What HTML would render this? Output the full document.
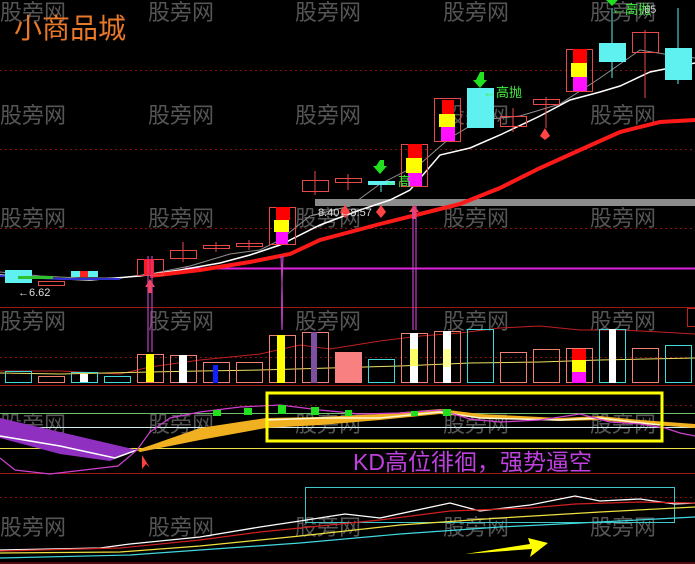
<!DOCTYPE html>
<html><head><meta charset="utf-8"><style>
html,body{margin:0;padding:0;background:#000;}
svg{display:block}
text{font-family:"Liberation Sans","Noto Sans CJK SC",sans-serif}
</style></head><body>
<svg width="695" height="564" viewBox="0 0 695 564" xmlns="http://www.w3.org/2000/svg">
<rect width="695" height="564" fill="#000"/>
<g stroke="#8a1010" stroke-width="1" stroke-dasharray="2,3">
<line x1="0" y1="70.5" x2="695" y2="70.5"/><line x1="0" y1="149.5" x2="695" y2="149.5"/><line x1="0" y1="228.5" x2="695" y2="228.5"/>
<line x1="0" y1="357.5" x2="695" y2="357.5"/><line x1="0" y1="405.5" x2="695" y2="405.5"/><line x1="0" y1="497.5" x2="695" y2="497.5"/>
</g>
<g stroke="#a01818" stroke-width="1">
<line x1="0" y1="307.5" x2="695" y2="307.5"/><line x1="0" y1="385.5" x2="695" y2="385.5"/><line x1="0" y1="473.5" x2="695" y2="473.5"/><line x1="0" y1="563" x2="695" y2="563"/>
</g>
<g fill="#555" font-size="22">
<text x="0" y="20">股旁网</text><text x="148" y="20">股旁网</text><text x="295" y="20">股旁网</text><text x="443" y="20">股旁网</text><text x="590" y="20">股旁网</text>
<text x="0" y="123">股旁网</text><text x="148" y="123">股旁网</text><text x="295" y="123">股旁网</text><text x="443" y="123">股旁网</text><text x="590" y="123">股旁网</text>
<text x="0" y="226">股旁网</text><text x="148" y="226">股旁网</text><text x="295" y="226">股旁网</text><text x="443" y="226">股旁网</text><text x="590" y="226">股旁网</text>
<text x="0" y="329">股旁网</text><text x="148" y="329">股旁网</text><text x="295" y="329">股旁网</text><text x="443" y="329">股旁网</text><text x="590" y="329">股旁网</text>
<text x="0" y="432">股旁网</text><text x="148" y="432">股旁网</text><text x="295" y="432">股旁网</text><text x="443" y="432">股旁网</text><text x="590" y="432">股旁网</text>
<text x="0" y="535">股旁网</text><text x="148" y="535">股旁网</text><text x="295" y="535">股旁网</text><text x="443" y="535">股旁网</text><text x="590" y="535">股旁网</text>
</g>
<text x="14" y="38" fill="#e8782a" font-size="28">小商品城</text>
<rect x="315" y="199" width="380" height="7" fill="#8c8c8c"/>
<line x1="185" y1="268.5" x2="695" y2="268.5" stroke="#e020e0" stroke-width="2"/>
<polyline points="0,272 40,276 80,278 120,278 150,274 190,266 230,254 260,250 280,240 310,216 350,206 380,184 420,164 450,138 480,120 520,116 560,104 600,78 640,50 670,55 695,58" fill="none" stroke="#909090" stroke-width="1"/>
<polyline points="0,275 40,278 90,280 140,276 180,270 220,263 250,255 280,245 320,225 360,210 390,200 410,190 440,155 470,148 500,135 540,116 570,100 600,92 620,86 650,72 680,66 695,63" fill="none" stroke="#fff" stroke-width="1.5"/>
<polyline points="150,276 200,270 250,262 290,254 320,240 380,224 420,214 460,204 500,188 540,168 580,150 620,132 660,122 695,120" fill="none" stroke="#ff1a1a" stroke-width="4"/>
<polyline points="0,276 60,279 120,279" fill="none" stroke="#3030d0" stroke-width="2"/>
<g stroke="#e84848" stroke-width="1" fill="none">
<line x1="183" y1="242" x2="183" y2="262"/><rect x="170.5" y="250.5" width="26" height="8"/>
<line x1="216" y1="242" x2="216" y2="252"/><rect x="203.5" y="245.5" width="26" height="3"/>
<line x1="249" y1="240" x2="249" y2="250"/><rect x="236.5" y="243.5" width="26" height="3"/>
<line x1="315" y1="171" x2="315" y2="195"/><rect x="302.5" y="180.5" width="26" height="11"/>
<line x1="348" y1="174" x2="348" y2="190"/><rect x="335.5" y="178.5" width="26" height="4"/>
<line x1="513" y1="108" x2="513" y2="132"/><rect x="500.5" y="116.5" width="26" height="10"/>
<line x1="546" y1="97" x2="546" y2="128"/><rect x="533.5" y="99.5" width="26" height="5"/>
<line x1="645" y1="30" x2="645" y2="98"/><rect x="632.5" y="32.5" width="26" height="20"/>
<rect x="38.5" y="281.5" width="26" height="4"/>
<rect x="137.5" y="259.5" width="26" height="16"/>
<rect x="269.5" y="207.5" width="26" height="37"/>
<rect x="401.5" y="144.5" width="26" height="42"/>
<rect x="434.5" y="98.5" width="26" height="43"/>
<rect x="566.5" y="49.5" width="26" height="42"/>
</g>
<rect x="144" y="259" width="10" height="16" fill="#ff1a1a"/>
<g fill="#5ff0f0">
<rect x="5" y="270" width="27" height="13"/>
<rect x="71" y="271" width="27" height="6"/>
<rect x="368" y="181" width="27" height="4"/>
<rect x="467" y="88" width="27" height="40"/>
<rect x="599" y="43" width="27" height="19"/>
<rect x="665" y="48" width="27" height="32"/>
</g>
<g stroke="#5ff0f0"><line x1="612" y1="8" x2="612" y2="78"/><line x1="678" y1="8" x2="678" y2="84"/><line x1="381" y1="185" x2="381" y2="192"/></g>
<rect x="80" y="271" width="8" height="6" fill="#ff2020"/>
<rect x="18" y="276" width="35" height="3" fill="#30c030"/>
<g>
<rect x="276" y="207" width="14" height="13" fill="#ff0000"/><rect x="274" y="220" width="15" height="12" fill="#ffff00"/><rect x="276" y="232" width="12" height="12" fill="#ff10ff"/>
<rect x="408" y="144" width="14" height="14" fill="#ff0000"/><rect x="406" y="158" width="16" height="15" fill="#ffff00"/><rect x="408" y="173" width="14" height="13" fill="#ff10ff"/>
<rect x="442" y="100" width="12" height="14" fill="#ff0000"/><rect x="439" y="114" width="16" height="13" fill="#ffff00"/><rect x="441" y="127" width="14" height="14" fill="#ff10ff"/>
<rect x="573" y="49" width="14" height="14" fill="#ff0000"/><rect x="571" y="63" width="16" height="14" fill="#ffff00"/><rect x="573" y="77" width="14" height="14" fill="#ff10ff"/>
</g>
<g fill="#ff4444">
<polygon points="150,279 145,287 148,287 148,293 152,293 152,287 155,287"/>
<polygon points="345,205 340,212 345,218 350,212"/>
<polygon points="381,205 376,212 381,218 386,212"/>
<polygon points="414,205 409,212 412,212 412,219 416,219 416,212 419,212"/>
<polygon points="545,128 540,136 545,140 550,136"/>
</g>
<g fill="#20e020">
<polygon points="380,160 376,166 373,166 380,174 387,166 384,166 384,160"/>
<polygon points="480,72 476,80 473,80 480,88 487,80 484,80 484,72"/>
<polygon points="612,0 606,0 612,6 618,0"/>
</g>
<g fill="#40f040" font-size="13">
<text x="385" y="186">←高</text><text x="483" y="97">←高抛</text><text x="612" y="14">←高抛</text>
</g>
<text x="641" y="13" fill="#ccc" font-size="11">.65</text>
<text x="318" y="216" fill="#ddd" font-size="11">8.40←8.57</text>
<text x="18" y="296" fill="#ddd" font-size="11">←6.62</text>
<g stroke="#c040c0" stroke-width="1.2" fill="none">
<path d="M148,256 L148,352 M152,256 L152,352"/>
<path d="M281,256 Q283,300 282,330 Q281,300 283,256"/>
<path d="M413,206 L413,330 M416,206 L416,330"/>
</g>
<polyline points="0,371 60,371 120,374 150,367 200,360 260,354 300,345 330,349 380,341 420,336 460,333 500,328 540,326 580,330 620,330 660,332 695,334" fill="none" stroke="#c02020"/>
<polyline points="0,373 60,374 150,372 200,371 260,370 330,368 400,366 470,363 540,362 600,360 695,358" fill="none" stroke="#f0e060"/>
<g fill="none" stroke-width="1">
<rect x="5.5" y="371.5" width="26" height="11" stroke="#40d8d8"/>
<rect x="38.5" y="376.5" width="26" height="6" stroke="#f08070"/>
<rect x="71.5" y="372.5" width="26" height="10" stroke="#40d8d8"/>
<rect x="104.5" y="376.5" width="26" height="6" stroke="#40d8d8"/>
<rect x="137.5" y="354.5" width="26" height="28" stroke="#f08070"/>
<rect x="170.5" y="355.5" width="26" height="27" stroke="#f08070"/>
<rect x="203.5" y="362.5" width="26" height="20" stroke="#f08070"/>
<rect x="236.5" y="362.5" width="26" height="20" stroke="#f08070"/>
<rect x="269.5" y="335.5" width="26" height="47" stroke="#f08070"/>
<rect x="302.5" y="332.5" width="26" height="50" stroke="#f08070"/>
<rect x="368.5" y="359.5" width="26" height="23" stroke="#40d8d8"/>
<rect x="401.5" y="333.5" width="26" height="49" stroke="#f08070"/>
<rect x="434.5" y="331.5" width="26" height="51" stroke="#f08070"/>
<rect x="467.5" y="329.5" width="26" height="53" stroke="#40d8d8"/>
<rect x="500.5" y="352.5" width="26" height="30" stroke="#f08070"/>
<rect x="533.5" y="349.5" width="26" height="33" stroke="#f08070"/>
<rect x="566.5" y="348.5" width="26" height="34" stroke="#f08070"/>
<rect x="599.5" y="329.5" width="26" height="53" stroke="#40d8d8"/>
<rect x="632.5" y="348.5" width="26" height="34" stroke="#f08070"/>
<rect x="665.5" y="345.5" width="26" height="37" stroke="#40d8d8"/>
<rect x="687.5" y="308.5" width="10" height="18" stroke="#c02020"/>
</g>
<rect x="80" y="374" width="8" height="8" fill="#fff"/>
<rect x="146" y="354" width="8" height="28" fill="#ffff00"/>
<rect x="179" y="355" width="8" height="28" fill="#fff"/>
<rect x="213" y="365" width="5" height="18" fill="#1020ff"/>
<rect x="277" y="335" width="8" height="48" fill="#ffff00"/>
<rect x="311" y="332" width="6" height="51" fill="#8050a0"/>
<rect x="335" y="352" width="27" height="31" fill="#f88080"/>
<rect x="410" y="333" width="8" height="50" fill="#ffff66"/><rect x="410" y="333" width="8" height="16" fill="#fff"/><rect x="410" y="366" width="8" height="17" fill="#fff"/>
<rect x="443" y="331" width="8" height="52" fill="#fff"/><rect x="443" y="349" width="8" height="18" fill="#ffff99"/>
<rect x="572" y="349" width="14" height="11" fill="#ff0000"/><rect x="572" y="360" width="14" height="12" fill="#ffff00"/><rect x="572" y="372" width="14" height="11" fill="#ff10ff"/>
<rect x="609" y="329" width="7" height="54" fill="#fff"/>
<line x1="0" y1="413.5" x2="695" y2="413.5" stroke="#70c070"/>
<line x1="0" y1="427.5" x2="695" y2="427.5" stroke="#d0f0f0"/>
<line x1="0" y1="448.5" x2="695" y2="448.5" stroke="#f0e040"/>
<polygon points="0,418 60,432 120,446 137,450 110,461 60,454 0,438" fill="#9030c0"/>
<polyline points="0,436 60,446 115,458 137,450" fill="none" stroke="#fff" stroke-width="1.5"/>
<polygon points="137,450 200,428 266,418 320,417 380,414 440,409 480,414 560,418 600,416 640,420 695,424 695,428 640,424 600,420 560,421 480,418 440,414 380,420 320,425 266,428 200,440 140,452" fill="#f0b020"/>
<polyline points="266,420 320,418 380,418 440,412 480,418 560,420 600,418 660,425" fill="none" stroke="#fff8d0" stroke-width="1.5"/>
<polyline points="0,458 15,470 50,474 118,466 137,450 150,432 170,418 200,412 240,407 280,405 320,410 360,414 400,413 440,410 470,419 500,422 540,420 580,414 610,422 640,424 665,428 680,433 695,436" fill="none" stroke="#d040d0" stroke-width="1.2"/>
<g fill="#20e020">
<rect x="213" y="410" width="8" height="6"/><rect x="244" y="408" width="8" height="7"/><rect x="278" y="405" width="8" height="9"/><rect x="311" y="407" width="8" height="8"/><rect x="345" y="410" width="7" height="6"/><rect x="411" y="411" width="7" height="5"/><rect x="443" y="409" width="8" height="7"/>
</g>
<rect x="267" y="393" width="395" height="48" fill="none" stroke="#ffff00" stroke-width="3"/>
<polygon points="142,455 150,468 146,464 142,469" fill="#ff4040"/>
<text x="353" y="470" fill="#c040e0" font-size="23">KD高位徘徊，强势逼空</text>
<rect x="305.5" y="487.5" width="369" height="35" fill="none" stroke="#40c8c8"/>
<polyline points="0,550 100,548 130,544 200,537 260,527 300,521 345,514 380,518 450,503 480,511 530,505 575,496 600,501 640,499 675,504 695,503" fill="none" stroke="#fff" stroke-width="1.3"/>
<polyline points="0,551 120,548 200,540 260,532 330,525 380,520 450,511 530,508 575,504 640,502 695,503" fill="none" stroke="#d02020" stroke-width="1.2"/>
<polyline points="0,553 120,552 200,546 300,536 400,525 500,518 600,512 695,507" fill="none" stroke="#f0e040" stroke-width="1.2"/>
<polyline points="0,558 130,555 200,550 300,543 400,534 500,527 600,522 695,517" fill="none" stroke="#40d8e0" stroke-width="1.2"/>
<polygon points="465,554 530,544 528,538 548,543 530,557 532,549" fill="#ffff00"/>
</svg>
</body></html>
